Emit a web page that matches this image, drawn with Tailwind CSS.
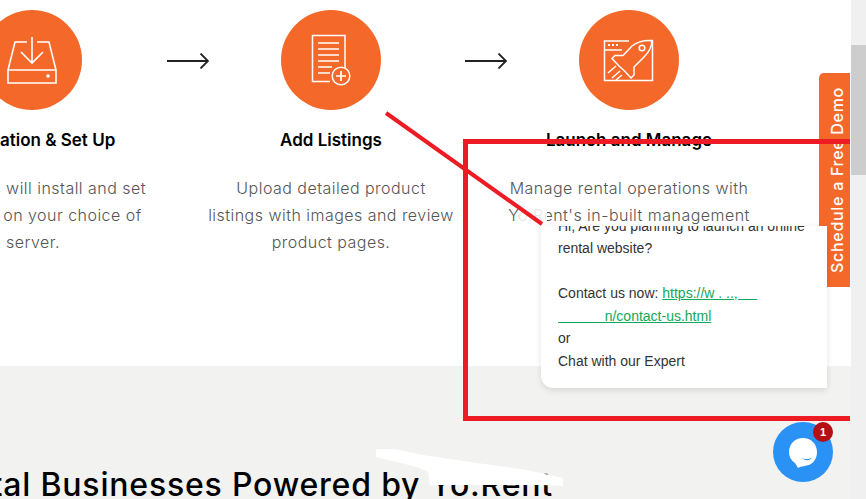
<!DOCTYPE html>
<html lang="en">
<head>
  <meta charset="UTF-8" />
  <meta name="viewport" content="width=device-width, initial-scale=1.0" />
  <title>Rental Businesses</title>
  <script src="https://cdn.jsdelivr.net/npm/@tailwindcss/browser@4"></script>
</head>
<body class="h-[499px] overflow-hidden bg-white font-['Inter','Liberation_Sans',sans-serif]">
  <div class="flex h-[499px]">
    <main class="relative w-[851px] overflow-hidden">
      <!-- steps -->
      <section class="h-[366px] bg-white pt-[10px]">
        <div class="flex ml-[-96px] w-[1000px] translate-x-[1px]">
          <div class="w-[256px] shrink-0 text-center">
            <div class="mx-auto h-[100px] w-[100px] -translate-x-[1px] rounded-full bg-[#f4692a]">
              <svg viewBox="0 0 100 100" class="h-[100px] w-[100px]" fill="none" stroke="#fff" stroke-width="1.6">
                <path d="M45 32H33L26 60V73H74V60L67 32H55M26 60H74" />
                <path d="M50 27V52M39 42L50 53L61 42" />
                <circle cx="66" cy="66" r="1.8" fill="#fff" stroke="none" />
              </svg>
            </div>
            <h3 class="mt-[20px] whitespace-nowrap text-[17px] leading-[20px] font-semibold text-black">Installation &amp; Set Up</h3>
            <p class="mt-[25px] whitespace-nowrap text-[16px] leading-[27px] font-light tracking-[0.47px] text-[#555]">Our teams will install and set<br />the script on your choice of<br />server.</p>
          </div>
          <div class="h-[100px] w-[42px] shrink-0 ml-[6px] mr-[-6px] pt-[1px] flex items-center">
            <svg viewBox="0 0 42 16" class="h-[16px] w-[42px]" fill="none" stroke="#222" stroke-width="1.8"><path d="M0 8H41M33.500 0.500L41 8L33.500 15.500" /></svg>
          </div>
          <div class="w-[256px] shrink-0 text-center">
            <div class="mx-auto h-[100px] w-[100px] rounded-full bg-[#f4692a]">
              <svg viewBox="0 0 100 100" class="h-[100px] w-[100px]" fill="none" stroke="#fff" stroke-width="1.5">
                <path d="M64 58V25.500H31.500V71.500H49" />
                <path d="M37 33H58M37 39H58M37 45H58M37 51H58M37 57H51M37 63H49" />
                <circle cx="60" cy="66" r="8.800" />
                <path d="M60 61V71M55 66H65" stroke-width="1.700" />
              </svg>
            </div>
            <h3 class="mt-[20px] whitespace-nowrap text-[17px] leading-[20px] font-semibold text-black">Add Listings</h3>
            <p class="mt-[25px] whitespace-nowrap text-[16px] leading-[27px] font-light tracking-[0.47px] text-[#555]">Upload detailed product<br />listings with images and review<br />product pages.</p>
          </div>
          <div class="h-[100px] w-[42px] shrink-0 ml-[6px] mr-[-6px] pt-[1px] flex items-center">
            <svg viewBox="0 0 42 16" class="h-[16px] w-[42px]" fill="none" stroke="#222" stroke-width="1.8"><path d="M0 8H41M33.500 0.500L41 8L33.500 15.500" /></svg>
          </div>
          <div class="w-[256px] shrink-0 text-center">
            <div class="mx-auto h-[100px] w-[100px] rounded-full bg-[#f4692a]">
              <svg viewBox="0 0 100 100" class="h-[100px] w-[100px]" fill="none" stroke="#fff" stroke-width="1.500">
                <path d="M50 31H25.500V70.500H73.500V31H71M25.500 40H43" />
                <path d="M73 30.500C66 30 58 32 53 36L44 45.500L36 45.500L33 48.500L40 56L45 60.500L52 68L55 65L55 57L65 47C70 42 73 37 73 30.500Z" />
                <circle cx="63" cy="38" r="2.800" />
                <path d="M29 63L37 56M33 68L41 61M37 70L43 65" />
                <path d="M29 35H31M33 35H35M37 35H39" stroke-width="1.800" />
              </svg>
            </div>
            <h3 class="mt-[20px] whitespace-nowrap text-[17px] leading-[20px] font-semibold text-black">Launch and Manage</h3>
            <p class="mt-[25px] whitespace-nowrap text-[16px] leading-[27px] font-light tracking-[0.47px] text-[#555]">Manage rental operations with<br />Yo:Rent's in-built management<br />dashboard.</p>
          </div>
        </div>
      </section>

      <!-- businesses -->
      <section class="h-[133px] bg-[#f2f2f0] pt-[99px]">
        <div class="flex w-[553px] justify-end">
          <h2 class="shrink-0 whitespace-nowrap text-[32px] leading-[40px] font-medium tracking-[0.8px] text-black">Rental Businesses Powered by Yo:Rent</h2>
        </div>
      </section>

      <!-- scribbled redactions over the screenshot -->
      <svg class="absolute left-0 top-0 h-[499px] w-[851px]" viewBox="0 0 851 499">
        <path d="M519 206H547V226H519Z" fill="#fff" fill-opacity="0.85" />
        <path d="M376 449H395L423 455L470 462L527 470L563 478V486L543 485H430L428 472L417 467L376 457Z" fill="#fff" />
      </svg>

      <!-- schedule tab -->
      <a class="absolute left-[819px] top-[73px] flex h-[214px] w-[31px] items-center justify-center rounded-tl-[5px] bg-[#f4692a] pl-[4px]">
        <span class="-rotate-90 whitespace-nowrap text-[16px] font-medium tracking-[0.7px] text-white">Schedule a Free Demo</span>
      </a>

      <!-- chat popup -->
      <div class="absolute left-[541px] top-[226px] h-[162px] w-[286px] overflow-hidden rounded-bl-[12px] bg-white pl-[17px] font-['Liberation_Sans',sans-serif] text-[14px] leading-[22.500px] text-[#333] shadow-[0_2px_6px_rgba(0,0,0,0.12)]">
        <div class="mt-[-11.500px] whitespace-nowrap">
          Hi, Are you planning to launch an online<br />
          rental website?<br />
          <br />
          Contact us now: <a class="text-[#12a85a] underline">https://w&nbsp;.&nbsp;..,&nbsp;&nbsp;&nbsp;&nbsp;&nbsp;<br />&nbsp;&nbsp;&nbsp;&nbsp;&nbsp;&nbsp;&nbsp;&nbsp;&nbsp;&nbsp;&nbsp;&nbsp;n/contact-us.html</a><br />
          or<br />
          Chat with our Expert
        </div>
      </div>

      <!-- red annotation -->
      <div class="absolute left-[463px] top-[139px] h-[282px] w-[387px] border-y-[5px] border-l-[5px] border-[#ed1c24]"></div>
      <svg class="absolute left-[380px] top-[108px] h-[122px] w-[170px]" viewBox="0 0 170 122" fill="none" stroke="#ed1c24" stroke-width="4"><path d="M6 5L162 116" /></svg>

      <!-- chat button -->
      <button class="absolute left-[773px] top-[422px] flex h-[60px] w-[60px] items-center justify-center rounded-full bg-[#2a92f5]">
        <svg viewBox="0 0 60 60" class="h-[60px] w-[60px]">
          <path d="M30 16C22 16 16 22 16 30C16 35 18.500 38.500 22 41L25 46C28 44 33 44 36 43C41 41 44 36 44 30C44 22 38 16 30 16Z" fill="#fff" />
          <path d="M29 35.500C31 37.500 36 37.500 39 35.500C37 39 31 39 29 35.500Z" fill="#2a92f5" />
        </svg>
        <span class="absolute left-[40px] top-0 flex h-[20px] w-[20px] items-center justify-center rounded-full bg-[#b30f14] font-['Liberation_Sans',sans-serif] text-[11px] font-bold text-white">1</span>
      </button>
    </main>

    <!-- page scrollbar -->
    <div class="w-[15px] bg-[#f0f0f0] pt-[45px]">
      <div class="h-[130px] bg-[#cdcdcd]"></div>
    </div>
  </div>
</body>
</html>
